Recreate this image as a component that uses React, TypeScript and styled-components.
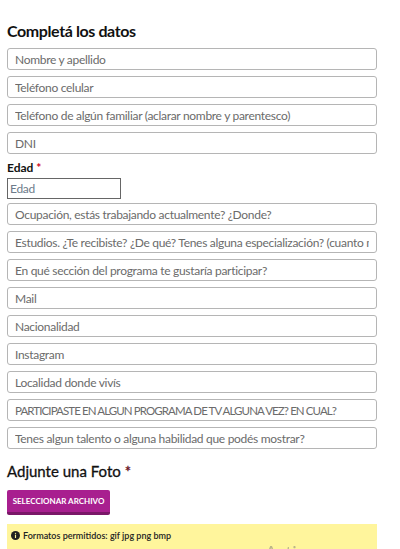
import React from 'react'
import styled, { createGlobalStyle } from 'styled-components'

const GlobalStyle = createGlobalStyle`
body {
  margin: 0;
  background: #fff;
  font-family: 'Lato', 'Noto Sans', sans-serif;
  color: #222;
  overflow: hidden;
}
`

const fields = [
    'Nombre y apellido',
    'Teléfono celular',
    'Teléfono de algún familiar (aclarar nombre y parentesco)',
    'DNI',
]

const moreFields = [
    'Ocupación, estás trabajando actualmente? ¿Donde?',
    'Estudios. ¿Te recibiste? ¿De qué? Tenes alguna especialización? (cuanto más detalle mejor)',
    'En qué sección del programa te gustaría participar?',
    'Mail',
    'Nacionalidad',
    'Instagram',
    'Localidad donde vivís',
    'PARTICIPASTE EN ALGUN PROGRAMA DE TV ALGUNA VEZ? EN CUAL?',
    'Tenes algun talento o alguna habilidad que podés mostrar?',
]

// uppercase text runs much wider in Lato than in the original font
const isCaps = (s: string) => s === s.toUpperCase()

const App = () => {
  return (
    <>
      <GlobalStyle />
      <Page>
        <Title>Completá los datos</Title>
        {fields.map((f) => (
            <Field key={f} placeholder={f} />
        ))}
        <Label>Edad <Req>*</Req></Label>
        <AgeInput placeholder='Edad' />
        {moreFields.map((f) => (
            <Field key={f} placeholder={f} $caps={isCaps(f)} />
        ))}
        <SubTitle>Adjunte una Foto <Req>*</Req></SubTitle>
        <UploadButton>Seleccionar archivo</UploadButton>
        <Notice>
            <svg width='9' height='9' viewBox='0 0 16 16'>
                <circle cx='8' cy='8' r='8' fill='#222' />
                <rect x='7' y='6.5' width='2' height='6' fill='#fff59c' />
                <circle cx='8' cy='4.2' r='1.2' fill='#fff59c' />
            </svg>
            <span>Formatos permitidos: gif jpg png bmp</span>
        </Notice>
      </Page>
      <Watermark>Activar Windows</Watermark>
    </>
  )
}

export default App

const Page = styled.div`
width: 370px;
padding: 0 0 0 7px;
display: flex;
flex-direction: column;
`
const Title = styled.h2`
margin: 21px 0 7px;
height: 20px;
line-height: 20px;
font-size: 16px;
font-weight: 700;
letter-spacing: -0.4px;
color: #111;
`
const Field = styled.input<{ $caps?: boolean }>`
box-sizing: border-box;
width: 100%;
height: 22px;
margin: 0 0 6px;
padding: 0 7px;
border: 1px solid #b5b5b5;
border-radius: 3px;
font-family: inherit;
font-size: ${(p) => (p.$caps ? '11.5px' : '12px')};
letter-spacing: ${(p) => (p.$caps ? '-0.9px' : '-0.3px')};
color: #555;
outline: none;
&::placeholder {
  color: #6b6b6b;
}
`
const Label = styled.div`
margin: 0 0 2px;
height: 16px;
line-height: 16px;
font-size: 12px;
font-weight: 700;
color: #111;
`
const Req = styled.span`
color: #d0021b;
`
const AgeInput = styled.input`
box-sizing: border-box;
width: 114px;
height: 21px;
margin: 0 0 4px;
padding: 0 2px;
border: 1px solid #666;
border-radius: 0;
font-family: inherit;
font-size: 12px;
letter-spacing: -0.3px;
outline: none;
&::placeholder {
  color: #6d7b8a;
}
`
const SubTitle = styled.h3`
margin: 7px 0 10px;
height: 18px;
line-height: 18px;
font-size: 15px;
font-weight: 400;
color: #111;
-webkit-text-stroke: 0.3px #111;
`
const UploadButton = styled.button`
align-self: flex-start;
width: 103px;
height: 25px;
padding: 0;
border: none;
border-bottom: 3px solid #7a1768;
border-radius: 2px;
background: #a81f8f;
color: #fff;
font-family: inherit;
font-size: 8px;
font-weight: 700;
text-transform: uppercase;
`
const Notice = styled.div`
margin-top: 9px;
height: 40px;
padding: 6px 0 0 4px;
box-sizing: border-box;
background: #fff59c;
display: flex;
align-items: flex-start;
gap: 3px;
font-size: 9px;
font-weight: 600;
color: #222;
svg {
  margin-top: 1px;
}
`
const Watermark = styled.div`
position: fixed;
left: 265px;
top: 541px;
font-size: 18px;
color: rgba(120, 120, 120, 0.5);
pointer-events: none;
`
